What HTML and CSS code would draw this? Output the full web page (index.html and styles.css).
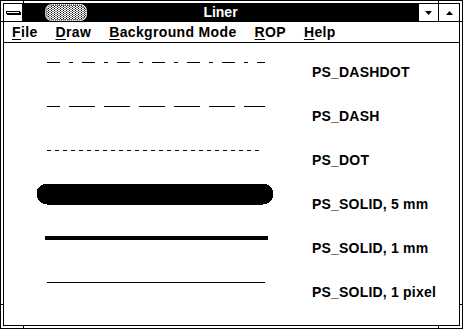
FILE: index.html
```html
<!DOCTYPE html>
<html lang="en">
<head>
    <meta charset="UTF-8">
    <title>Liner</title>
    <link rel="stylesheet" href="styles.css">
</head>
<body>
    <div class="window">
        <span class="tick tick-h tick-tl"></span>
        <span class="tick tick-h tick-tr"></span>
        <span class="tick tick-h tick-bl"></span>
        <span class="tick tick-h tick-br"></span>
        <span class="tick tick-v tick-lt"></span>
        <span class="tick tick-v tick-lb"></span>
        <span class="tick tick-v tick-rt"></span>
        <span class="tick tick-v tick-rb"></span>

        <div class="frame">
            <div class="titlebar">
                <div class="sysmenu"><span class="sysbar"></span></div>
                <div class="caption">
                    <svg class="logo" width="42" height="17" viewBox="0 0 42 17">
                        <defs>
                            <pattern id="dots" width="3" height="2" patternUnits="userSpaceOnUse">
                                <rect width="3" height="2" fill="#fff"/>
                                <rect x="0" y="0" width="1" height="1" fill="#000"/>
                                <rect x="1.5" y="1" width="1" height="1" fill="#000"/>
                            </pattern>
                        </defs>
                        <rect x="0" y="0" width="42" height="17" rx="7" fill="#fff"/>
                        <rect x="1" y="1" width="40" height="15" rx="7" fill="url(#dots)" stroke="#000" stroke-width="1" stroke-dasharray="1 1"/>
                    </svg>
                    <span class="caption-text">Liner</span>
                </div>
                <div class="btn btn-min">
                    <svg width="7" height="4" viewBox="0 0 7 4"><polygon points="0,0 7,0 3.5,4" fill="#000"/></svg>
                </div>
                <div class="btn btn-max">
                    <svg width="7" height="4" viewBox="0 0 7 4"><polygon points="3.5,0 7,4 0,4" fill="#000"/></svg>
                </div>
            </div>

            <div class="menubar">
                <span class="menu-item"><u>F</u>ile</span>
                <span class="menu-item"><u>D</u>raw</span>
                <span class="menu-item"><u>B</u>ackground Mode</span>
                <span class="menu-item"><u>R</u>OP</span>
                <span class="menu-item"><u>H</u>elp</span>
            </div>

            <div class="client">
                <div class="row">
                    <svg class="sample" viewBox="0 0 308 44">
                        <line x1="43" y1="19.5" x2="261" y2="19.5" stroke="#000" stroke-width="1" stroke-dasharray="13 9 4 9"/>
                    </svg>
                    <div class="label">PS_DASHDOT</div>
                </div>
                <div class="row">
                    <svg class="sample" viewBox="0 0 308 44">
                        <line x1="43" y1="19.5" x2="261" y2="19.5" stroke="#000" stroke-width="1" stroke-dasharray="26 9" stroke-dashoffset="13"/>
                    </svg>
                    <div class="label">PS_DASH</div>
                </div>
                <div class="row">
                    <svg class="sample" viewBox="0 0 308 44">
                        <line x1="43" y1="19.5" x2="258" y2="19.5" stroke="#000" stroke-width="1" stroke-dasharray="4 4"/>
                    </svg>
                    <div class="label">PS_DOT</div>
                </div>
                <div class="row">
                    <svg class="sample" viewBox="0 0 308 44">
                        <line x1="43" y1="19" x2="259" y2="19" stroke="#000" stroke-width="21" stroke-linecap="round"/>
                    </svg>
                    <div class="label">PS_SOLID, 5 mm</div>
                </div>
                <div class="row">
                    <svg class="sample" viewBox="0 0 308 44">
                        <line x1="41" y1="19" x2="264" y2="19" stroke="#000" stroke-width="4"/>
                    </svg>
                    <div class="label">PS_SOLID, 1 mm</div>
                </div>
                <div class="row">
                    <svg class="sample" viewBox="0 0 308 44">
                        <line x1="43" y1="19.5" x2="261" y2="19.5" stroke="#000" stroke-width="1"/>
                    </svg>
                    <div class="label">PS_SOLID, 1 pixel</div>
                </div>
            </div>
        </div>
    </div>
</body>
</html>
```

FILE: styles.css
```css
body {
    margin: 0;
    background-color: #fff;
    font-family: "Liberation Sans", Arial, sans-serif;
    color: #000;
}
.window {
    position: relative;
    width: 463px;
    height: 329px;
    box-sizing: border-box;
    border: 1px solid #000;
    padding: 2px;
    background-color: #fff;
}
/* little marks on the sizing border */
.tick {
    position: absolute;
    background-color: #000;
}
.tick-h {
    width: 1px;
    height: 3px;
}
.tick-v {
    width: 3px;
    height: 1px;
}
.tick-tl { top: 0; left: 22px; }
.tick-tr { top: 0; left: 437px; }
.tick-bl { bottom: 0; left: 22px; }
.tick-br { bottom: 0; left: 437px; }
.tick-lt { left: 0; top: 20px; }
.tick-lb { left: 0; top: 303px; }
.tick-rt { right: 0; top: 20px; }
.tick-rb { right: 0; top: 303px; }

.frame {
    height: 100%;
    box-sizing: border-box;
    border: 1px solid #000;
    display: flex;
    flex-direction: column;
}
.titlebar {
    display: flex;
    height: 17px;
    border-bottom: 1px solid #000;
    flex: none;
}
.sysmenu {
    width: 18px;
    border-right: 1px solid #000;
    display: flex;
    align-items: center;
    justify-content: center;
    background-color: #fff;
}
.sysbar {
    display: block;
    width: 12px;
    height: 1px;
    border: 1px solid #000;
    background-color: #fff;
    box-shadow: 1px 1px 0 #000;
    margin: 0 1px 0 0;
}
.caption {
    flex: 1;
    background-color: #000;
    display: grid;
    align-items: center;
}
.logo {
    grid-area: 1 / 1;
    justify-self: start;
    margin-left: 22px;
    display: block;
}
.caption-text {
    grid-area: 1 / 1;
    justify-self: center;
    color: #fff;
    font-weight: bold;
    font-size: 14px;
    line-height: 17px;
}
.btn {
    border-left: 1px solid #000;
    background-color: #fff;
    display: flex;
    align-items: center;
    justify-content: center;
}
.btn svg {
    display: block;
}
.btn-min {
    width: 19px;
}
.btn-max {
    width: 20px;
}
.menubar {
    display: flex;
    gap: 18px;
    flex: none;
    height: 19px;
    padding: 1px 0 0 8px;
    border-bottom: 1px solid #000;
    font-weight: bold;
    font-size: 14px;
    line-height: 19px;
    letter-spacing: 0.35px;
}
.menu-item u {
    text-decoration-thickness: 1px;
    text-underline-offset: 2px;
}
.client {
    flex: 1;
}
.row {
    display: flex;
    height: 44px;
}
.sample {
    width: 308px;
    height: 44px;
    flex: none;
    display: block;
    shape-rendering: crispEdges;
}
.label {
    margin-top: 21px;
    font-size: 14px;
    font-weight: bold;
    line-height: 16px;
    letter-spacing: 0.2px;
    white-space: nowrap;
}
```
